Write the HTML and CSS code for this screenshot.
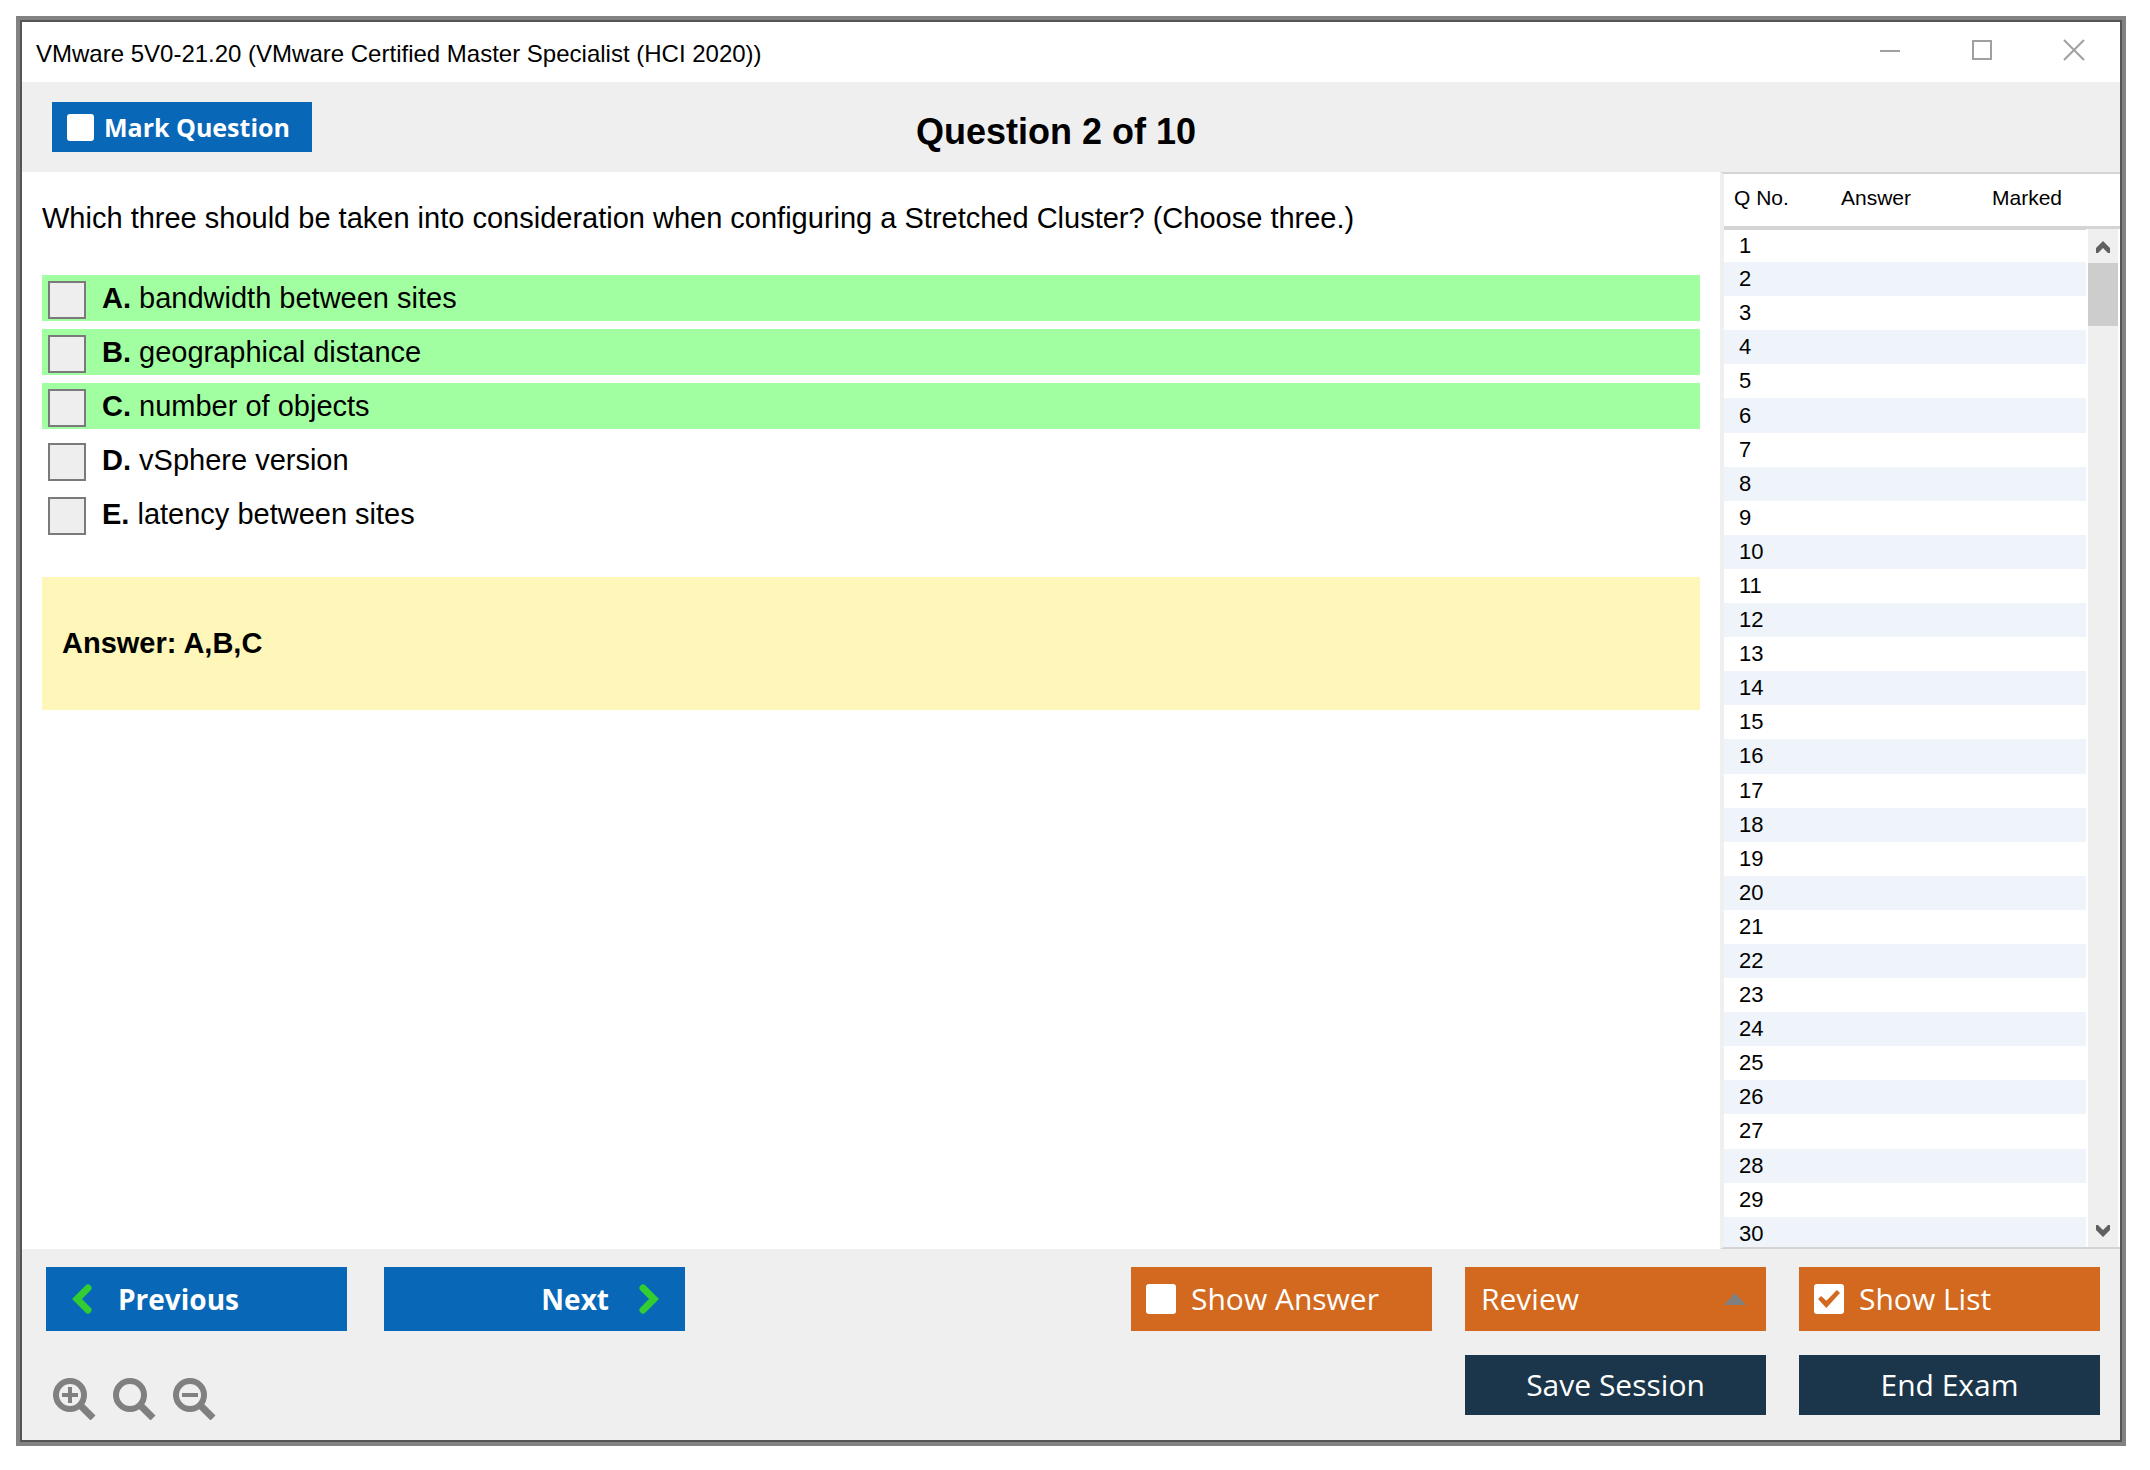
FILE: index.html
```html
<!DOCTYPE html>
<html lang="en">
<head>
<meta charset="utf-8">
<title>VMware 5V0-21.20</title>
<link rel="stylesheet" href="styles.css">
</head>
<body>
<div class="window">
  <header class="titlebar">
    <h1 class="titlebar-text">VMware 5V0-21.20 (VMware Certified Master Specialist (HCI 2020))</h1>
    <div class="window-controls">
      <button class="window-button" type="button" aria-label="Minimize"><svg width="22" height="22" viewBox="0 0 22 22"><path d="M1 12h20"/></svg></button>
      <button class="window-button" type="button" aria-label="Maximize"><svg width="22" height="22" viewBox="0 0 22 22"><path d="M2 2h18v18H2z"/></svg></button>
      <button class="window-button" type="button" aria-label="Close"><svg width="22" height="22" viewBox="0 0 22 22"><path d="M1 1l20 20M21 1L1 21"/></svg></button>
    </div>
  </header>

  <div class="question-bar">
    <label class="mark"><input class="tick tick-mark" type="checkbox">Mark Question</label>
    <h2 class="question-count">Question 2 of 10</h2>
  </div>

  <div class="content">
    <main class="question">
      <p class="question-text">Which three should be taken into consideration when configuring a Stretched Cluster? (Choose three.)</p>
      <div class="options">
        <label class="option option-correct"><input class="option-box" type="checkbox"><span><b>A.</b> bandwidth between sites</span></label>
        <label class="option option-correct"><input class="option-box" type="checkbox"><span><b>B.</b> geographical distance</span></label>
        <label class="option option-correct"><input class="option-box" type="checkbox"><span><b>C.</b> number of objects</span></label>
        <label class="option"><input class="option-box" type="checkbox"><span><b>D.</b> vSphere version</span></label>
        <label class="option"><input class="option-box" type="checkbox"><span><b>E.</b> latency between sites</span></label>
      </div>
      <p class="answer">Answer: A,B,C</p>
    </main>

    <aside class="list">
      <div class="list-rows">
        <table class="list-table">
          <thead><tr><th class="col-number">Q No.</th><th class="col-answer">Answer</th><th class="col-marked">Marked</th></tr></thead>
          <tbody>
            <tr><td>1</td><td></td><td></td></tr>
            <tr><td>2</td><td></td><td></td></tr>
            <tr><td>3</td><td></td><td></td></tr>
            <tr><td>4</td><td></td><td></td></tr>
            <tr><td>5</td><td></td><td></td></tr>
            <tr><td>6</td><td></td><td></td></tr>
            <tr><td>7</td><td></td><td></td></tr>
            <tr><td>8</td><td></td><td></td></tr>
            <tr><td>9</td><td></td><td></td></tr>
            <tr><td>10</td><td></td><td></td></tr>
            <tr><td>11</td><td></td><td></td></tr>
            <tr><td>12</td><td></td><td></td></tr>
            <tr><td>13</td><td></td><td></td></tr>
            <tr><td>14</td><td></td><td></td></tr>
            <tr><td>15</td><td></td><td></td></tr>
            <tr><td>16</td><td></td><td></td></tr>
            <tr><td>17</td><td></td><td></td></tr>
            <tr><td>18</td><td></td><td></td></tr>
            <tr><td>19</td><td></td><td></td></tr>
            <tr><td>20</td><td></td><td></td></tr>
            <tr><td>21</td><td></td><td></td></tr>
            <tr><td>22</td><td></td><td></td></tr>
            <tr><td>23</td><td></td><td></td></tr>
            <tr><td>24</td><td></td><td></td></tr>
            <tr><td>25</td><td></td><td></td></tr>
            <tr><td>26</td><td></td><td></td></tr>
            <tr><td>27</td><td></td><td></td></tr>
            <tr><td>28</td><td></td><td></td></tr>
            <tr><td>29</td><td></td><td></td></tr>
            <tr><td>30</td><td></td><td></td></tr>
          </tbody>
        </table>
      </div>
      <div class="scrollbar">
        <button class="scroll-button" type="button" aria-label="Scroll up"><svg width="14" height="12" viewBox="0 0 14 12"><path d="M0 7l7-7 7 7v5l-2 0-5-5-5 5-2 0z"/></svg></button>
        <div class="scroll-thumb"></div>
        <button class="scroll-button scroll-down" type="button" aria-label="Scroll down"><svg width="14" height="12" viewBox="0 0 14 12"><path d="M0 5l7 7 7-7V0l-2 0-5 5-5-5-2 0z"/></svg></button>
      </div>
    </aside>
  </div>

  <footer class="footer">
    <div class="footer-left">
      <div class="nav">
        <button class="button button-nav" type="button"><svg width="20" height="30" viewBox="0 0 20 30"><path d="M16 4L5 15l11 11"/></svg>Previous</button>
        <button class="button button-nav button-next" type="button">Next<svg width="20" height="30" viewBox="0 0 20 30"><path d="M4 4l11 11L4 26"/></svg></button>
      </div>
      <div class="zoom">
        <button class="zoom-button" type="button" aria-label="Zoom in"><svg width="44" height="44" viewBox="0 0 44 44"><circle cx="18" cy="19" r="14"/><path class="handle" d="M28 29l13 13"/><path class="sign" d="M18 11v16M10 19h16"/></svg></button>
        <button class="zoom-button" type="button" aria-label="Reset zoom"><svg width="44" height="44" viewBox="0 0 44 44"><circle cx="18" cy="19" r="14"/><path class="handle" d="M28 29l13 13"/></svg></button>
        <button class="zoom-button" type="button" aria-label="Zoom out"><svg width="44" height="44" viewBox="0 0 44 44"><circle cx="18" cy="19" r="14"/><path class="handle" d="M28 29l13 13"/><path class="sign" d="M10 19h16"/></svg></button>
      </div>
    </div>
    <div class="footer-right">
      <label class="button button-toggle"><input class="tick" type="checkbox">Show Answer</label>
      <div class="review">
        <select class="button button-select" aria-label="Review"><option>Review</option></select>
        <svg class="review-arrow" width="22" height="12" viewBox="0 0 22 12"><path d="M0 12L11 0l11 12z"/></svg>
      </div>
      <label class="button button-toggle"><input class="tick" type="checkbox" checked>Show List</label>
      <button class="button button-session" type="button">Save Session</button>
      <button class="button button-end" type="button">End Exam</button>
    </div>
  </footer>
</div>
</body>
</html>
```

FILE: styles.css
```css
* {
  box-sizing: border-box;
}

body {
  margin: 0;
  padding: 16px 24px 24px 16px;
  height: 100vh;
  background: #fff;
  color: #000;
  font-family: "Liberation Sans", Arial, sans-serif;
}

h1, h2, p {
  margin: 0;
}

button {
  padding: 0;
  border: 0;
  background: none;
  font: inherit;
}

svg {
  display: block;
  flex: none;
}

.window {
  display: flex;
  flex-direction: column;
  height: 100%;
  border: 4px solid #828282;
  outline: 2px solid #555;
  outline-offset: -6px;
  padding: 2px;
}

/* Title bar */
.titlebar {
  display: flex;
  align-items: center;
  justify-content: space-between;
  flex: none;
  height: 60px;
  padding: 0 35px 0 14px;
}

.titlebar-text {
  padding-top: 4px;
  font-size: 24px;
  line-height: 28px;
  font-weight: 400;
}

.window-controls {
  display: flex;
  gap: 70px;
  padding-bottom: 4px;
}

.window-button svg {
  fill: none;
  stroke: #a0a0a0;
  stroke-width: 2;
}

/* Question bar */
.question-bar {
  display: grid;
  grid-template-columns: 1fr auto 1fr;
  align-items: center;
  flex: none;
  height: 90px;
  padding: 0 60px 0 30px;
  background: #efefef;
}

.mark {
  display: flex;
  align-items: center;
  gap: 10px;
  width: 260px;
  height: 50px;
  padding-left: 15px;
  background: #0868b7;
  color: #fff;
  font: 700 25px/36px "Open Sans", "Noto Sans", sans-serif;
}

.question-count {
  padding-top: 10px;
  font-size: 36px;
  line-height: 40px;
}

.tick {
  appearance: none;
  flex: none;
  width: 30px;
  height: 30px;
  margin: 0;
  border-radius: 3px;
  background: #fff;
}

.tick-mark {
  width: 27px;
  height: 27px;
}

.tick:checked {
  display: grid;
  place-items: center;
}

.tick:checked::before {
  content: "";
  width: 22px;
  height: 18px;
  background: #d2691e;
  clip-path: polygon(0 50%, 14% 34%, 38% 60%, 86% 0, 100% 16%, 38% 100%);
}

/* Question and answers */
.content {
  display: flex;
  flex: 1;
  min-height: 0;
}

.question {
  flex: 1;
  padding: 28px 20px 0;
}

.question-text {
  font-size: 29px;
  line-height: 36px;
}

.options {
  display: grid;
  gap: 8px;
  margin-top: 39px;
}

.option {
  display: flex;
  align-items: center;
  gap: 16px;
  height: 46px;
  padding-left: 6px;
  font-size: 29px;
  line-height: 46px;
}

.option-correct {
  background: #a1ffa1;
}

.option-box {
  appearance: none;
  flex: none;
  width: 38px;
  height: 38px;
  margin: 4px 0 0;
  border: 2px solid #7a7a7a;
  background: #eee;
}

.answer {
  margin-top: 40px;
  padding: 48px 20px;
  background: #fef7b9;
  font-size: 29px;
  line-height: 37px;
  font-weight: 700;
}

/* Question list */
.list {
  display: grid;
  grid-template-columns: 1fr 34px;
  flex: none;
  width: 400px;
  border-left: 4px solid #efefef;
  border-top: 2px solid #d4d4d4;
  border-bottom: 2px solid #d4d4d4;
  overflow: hidden;
}

.list-rows {
  grid-row: 1;
  grid-column: 1 / 3;
  min-height: 0;
  height: 100%;
  overflow: hidden;
}

.list-table {
  width: 100%;
  height: calc(100% + 4px);
  border-collapse: collapse;
  table-layout: fixed;
  font-size: 22px;
}

.list-table th {
  height: 54px;
  padding: 0 0 4px 10px;
  border-bottom: 4px solid #d4d4d4;
  font-size: 21px;
  font-weight: 400;
  text-align: left;
}

.col-number {
  width: 107px;
}

.col-answer {
  width: 151px;
}

.list-table td {
  height: 34px;
  padding: 0 0 0 15px;
}

.list-table tbody tr:nth-child(even) {
  background: #eef4f9;
}

.scrollbar {
  grid-row: 1;
  grid-column: 2;
  z-index: 1;
  display: flex;
  flex-direction: column;
  margin-top: 55px;
  border: solid #fff;
  border-width: 0 2px;
  background: #efefef;
}

.scroll-button {
  display: grid;
  place-items: center;
  height: 34px;
  padding-top: 2px;
  fill: #606060;
}

.scroll-thumb {
  height: 63px;
  background: #cdcdcd;
}

.scroll-down {
  margin-top: auto;
}

/* Footer */
.footer {
  display: flex;
  justify-content: space-between;
  flex: none;
  padding: 18px 20px 20px 24px;
  background: #efefef;
}

.nav {
  display: flex;
  gap: 37px;
}

.button {
  display: flex;
  align-items: center;
  width: 301px;
  height: 64px;
  color: #fff;
  font: 400 30px/40px "Open Sans", "Noto Sans", sans-serif;
}

.button-nav {
  gap: 26px;
  padding: 0 26px;
  background: #0868b7;
  font-size: 28px;
  font-weight: 700;
}

.button-nav svg {
  fill: none;
  stroke: #32cd32;
  stroke-width: 7;
  stroke-linecap: round;
}

.button-next {
  gap: 30px;
  justify-content: flex-end;
}

.zoom {
  display: flex;
  gap: 16px;
  margin-top: 45px;
  padding-left: 6px;
}

.zoom-button svg {
  fill: none;
  stroke: #808080;
  stroke-width: 6;
}

.zoom-button .handle {
  stroke-width: 7;
}

.zoom-button .sign {
  stroke-width: 4;
}

.footer-right {
  display: grid;
  grid-template-columns: repeat(3, 301px);
  align-content: start;
  gap: 24px 33px;
}

.button-toggle {
  gap: 15px;
  padding-left: 15px;
  background: #d2691e;
}

.review {
  display: grid;
  align-items: center;
}

.button-select {
  grid-area: 1 / 1;
  appearance: none;
  padding: 0 16px;
  border: 0;
  border-radius: 0;
  background: #d2691e;
}

.review-arrow {
  grid-area: 1 / 1;
  justify-self: end;
  margin-right: 20px;
  fill: #808080;
  pointer-events: none;
}

.button-session, .button-end {
  justify-content: center;
  height: 60px;
  background: #1b364a;
}

.button-session {
  grid-column: 2;
}
```
